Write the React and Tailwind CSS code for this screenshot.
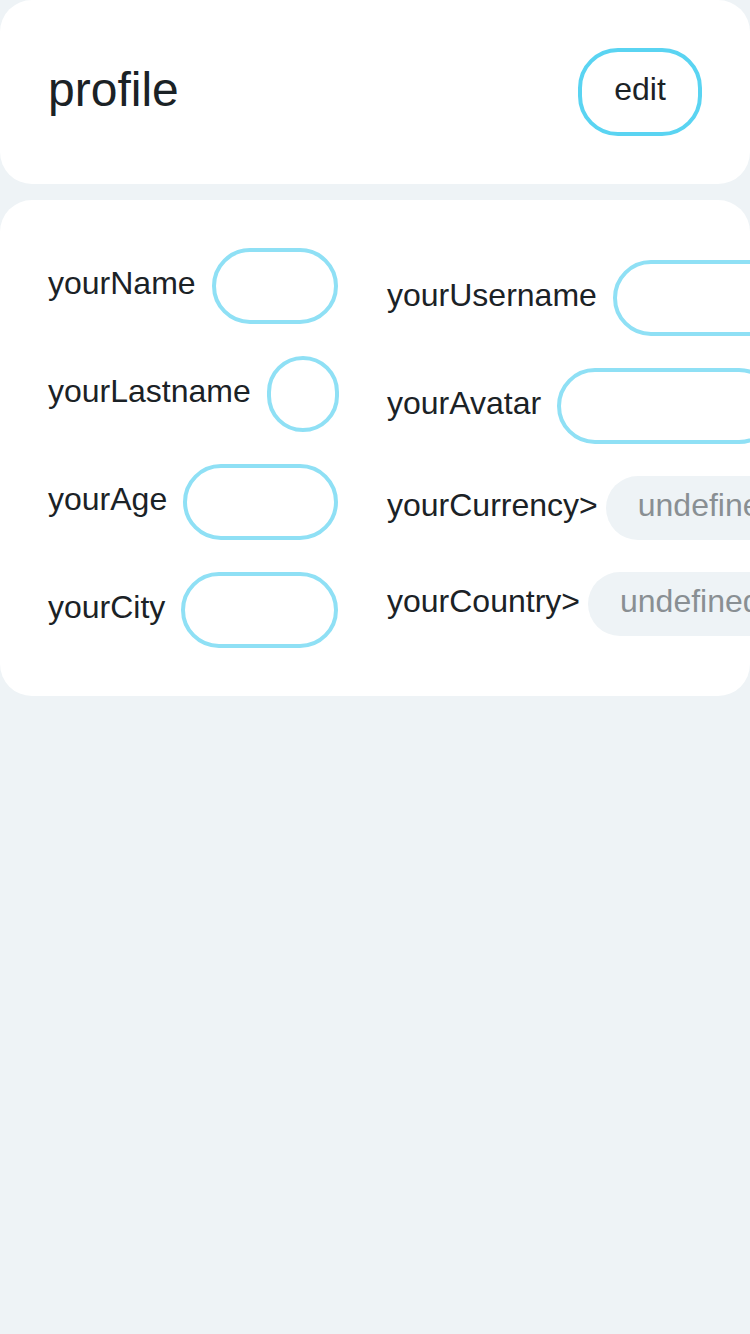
import React from "react";

const leftFields = [
  { label: "yourName" },
  { label: "yourLastname" },
  { label: "yourAge" },
  { label: "yourCity" },
];

const rightFields = [
  { label: "yourUsername", type: "input" },
  { label: "yourAvatar", type: "input" },
  { label: "yourCurrency>", type: "select" },
  { label: "yourCountry>", type: "select" },
];

function Field({ label, type = "input", fill }) {
  return (
    <div className={`flex items-center ${type === "input" ? "gap-4" : "gap-2"}`}>
      <span className="shrink-0 pb-1.5 text-[32px] leading-[37px] text-[#1b2226]">{label}</span>
      {type === "input" ? (
        <div
          className={`h-[76px] rounded-full border-4 border-[#8fe0f5] bg-white ${
            fill ? "min-w-[72px] flex-1" : "w-[220px] shrink-0"
          }`}
        />
      ) : (
        <div className="flex h-[64px] w-[220px] shrink-0 items-center rounded-full bg-[#eef3f6] px-8 pb-1.5 text-[32px] text-[#898f93]">
          undefined
        </div>
      )}
    </div>
  );
}

export default function App() {
  return (
    <div
      className="min-h-[1334px] w-full overflow-hidden bg-[#eef3f6]"
      style={{ fontFamily: '"Liberation Sans", Arial, sans-serif' }}
    >
      <div className="flex items-center justify-between rounded-[32px] bg-white p-12">
        <h1 className="-mt-1 text-[48px] font-normal leading-[56px] text-[#1b2226]">profile</h1>
        <button className="flex h-[88px] w-[124px] items-center justify-center rounded-[40px] border-4 border-[#5ad4f2] bg-white pb-1.5 text-[32px] text-[#1b2226]">
          edit
        </button>
      </div>

      <div className="mt-4 flex items-center gap-[49px] overflow-hidden rounded-[32px] bg-white py-12 pl-12">
        <div className="flex w-[290px] shrink-0 flex-col gap-8">
          {leftFields.map((f) => (
            <Field key={f.label} label={f.label} fill />
          ))}
        </div>
        <div className="flex shrink-0 flex-col gap-8">
          {rightFields.map((f) => (
            <Field key={f.label} label={f.label} type={f.type} />
          ))}
        </div>
      </div>
    </div>
  );
}
